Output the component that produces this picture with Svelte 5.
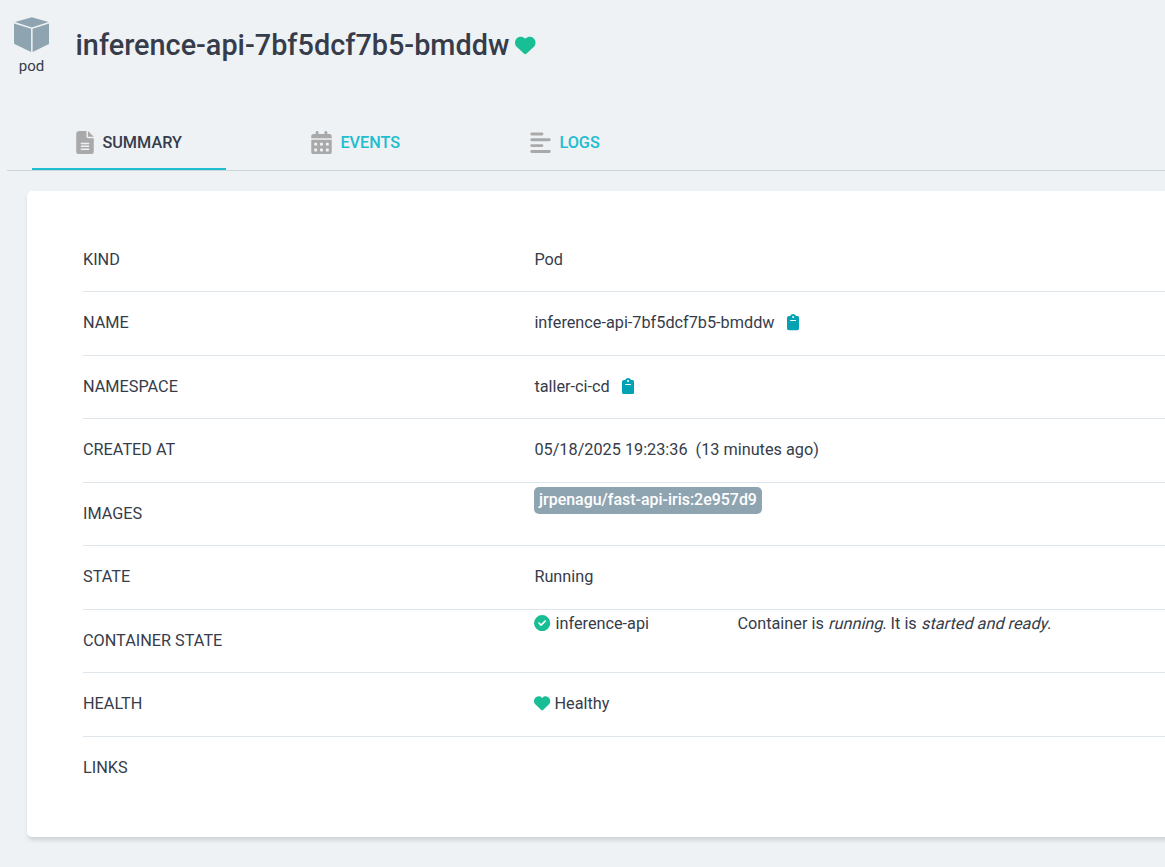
<script>
  const paths = {
    heart: 'M47.6 300.4L228.3 469.1c7.5 7 17.4 10.9 27.7 10.9s20.2-3.9 27.7-10.9L464.4 300.4c30.4-28.3 47.6-68 47.6-109.5v-5.8c0-69.9-50.5-129.5-119.4-141C347 36.5 300.6 51.4 268 84L256 96 244 84c-32.6-32.6-79-47.5-124.6-39.9C50.5 55.6 0 115.2 0 185.1v5.8c0 41.5 17.2 81.2 47.6 109.5z',
    check: 'M256 512A256 256 0 1 0 256 0a256 256 0 1 0 0 512zM369 209L241 337c-9.4 9.4-24.6 9.4-33.9 0l-64-64c-9.4-9.4-9.4-24.6 0-33.9s24.6-9.4 33.9 0l47 47L335 175c9.4-9.4 24.6-9.4 33.9 0s9.4 24.6 0 33.9z',
    clipboard: 'M192 0c-41.8 0-77.4 26.7-90.5 64H64C28.7 64 0 92.7 0 128V448c0 35.3 28.7 64 64 64H320c35.3 0 64-28.7 64-64V128c0-35.3-28.7-64-64-64H282.5C269.4 26.7 233.8 0 192 0zm0 64a32 32 0 1 1 0 64 32 32 0 1 1 0-64zM112 192H272c8.8 0 16 7.2 16 16s-7.2 16-16 16H112c-8.8 0-16-7.2-16-16s7.2-16 16-16z',
    file: 'M64 0C28.7 0 0 28.7 0 64V448c0 35.3 28.7 64 64 64H320c35.3 0 64-28.7 64-64V160H256c-17.7 0-32-14.3-32-32V0H64zM256 0V128H384L256 0zM112 256H272c8.8 0 16 7.2 16 16s-7.2 16-16 16H112c-8.8 0-16-7.2-16-16s7.2-16 16-16zm0 64H272c8.8 0 16 7.2 16 16s-7.2 16-16 16H112c-8.8 0-16-7.2-16-16s7.2-16 16-16zm0 64H272c8.8 0 16 7.2 16 16s-7.2 16-16 16H112c-8.8 0-16-7.2-16-16s7.2-16 16-16z',
    lines: 'M288 64c0 17.7-14.3 32-32 32H32C14.3 96 0 81.7 0 64S14.3 32 32 32H256c17.7 0 32 14.3 32 32zm0 256c0 17.7-14.3 32-32 32H32c-17.7 0-32-14.3-32-32s14.3-32 32-32H256c17.7 0 32 14.3 32 32zM0 192c0-17.7 14.3-32 32-32H416c17.7 0 32 14.3 32 32s-14.3 32-32 32H32c-17.7 0-32-14.3-32-32zM448 448c0 17.7-14.3 32-32 32H32c-17.7 0-32-14.3-32-32s14.3-32 32-32H416c17.7 0 32 14.3 32 32z'
  };
  const cells = [272, 400]
    .flatMap((y) => [64, 192, 320].map((x) => `M${x} ${y}v32q0 16 16 16h32q16 0 16-16v-32q0-16-16-16h-32q-16 0-16 16z`))
    .join('');
  const calendar =
    'M128 0c17.7 0 32 14.3 32 32V64H288V32c0-17.7 14.3-32 32-32s32 14.3 32 32V64h48c26.5 0 48 21.5 48 48v48H0V112C0 85.5 21.5 64 48 64H96V32c0-17.7 14.3-32 32-32zM0 192H448V464c0 26.5-21.5 48-48 48H48c-26.5 0-48-21.5-48-48V192z' +
    cells;
  const name = 'inference-api-7bf5dcf7b5-bmddw';
  const rows = [
    { label: 'KIND', text: 'Pod' },
    { label: 'NAME', text: name, copy: true },
    { label: 'NAMESPACE', text: 'taller-ci-cd', copy: true },
    { label: 'CREATED AT', text: '05/18/2025 19:23:36 \u00a0(13 minutes ago)' },
    { label: 'IMAGES', image: 'jrpenagu/fast-api-iris:2e957d9' },
    { label: 'STATE', text: 'Running' },
    { label: 'CONTAINER STATE', container: 'inference-api' },
    { label: 'HEALTH', health: 'Healthy' },
    { label: 'LINKS' }
  ];
</script>

{#snippet icon(d, cls, w = 512)}
  <svg class={cls} viewBox="0 0 {w} 512" fill="currentColor" fill-rule="evenodd" aria-hidden="true"><path {d} /></svg>
{/snippet}

<div class="page">
  <header>
    <div class="kind">
      <svg viewBox="0 0 36 35.5" fill="currentColor" aria-hidden="true">
        <path d="M18 0L35 4.8L18 10.3L1 4.8Z" />
        <path d="M0 6.3L17.3 11.7V35.3L1 27.4Q0 26.9 0 26Z" />
        <path d="M36 6.3L18.9 11.7V35.3L35 27.4Q36 26.9 36 26Z" />
      </svg>
      <span>pod</span>
    </div>
    <h1>{name}</h1>
    {@render icon(paths.heart, 'title-heart')}
  </header>

  <nav>
    <div class="tab active">{@render icon(paths.file, 'tab-icon file', 384)}<span>SUMMARY</span></div>
    <div class="tab events">{@render icon(calendar, 'tab-icon', 448)}<span>EVENTS</span></div>
    <div class="tab logs">{@render icon(paths.lines, 'tab-icon', 448)}<span>LOGS</span></div>
  </nav>

  <section class="card">
    {#each rows as row}
      <div class="row">
        <div class="label">{row.label}</div>
        <div class="value" class:top={row.image || row.container}>
          {#if row.text}<span>{row.text}</span>{/if}
          {#if row.copy}{@render icon(paths.clipboard, 'copy', 384)}{/if}
          {#if row.image}<span class="badge">{row.image}</span>{/if}
          {#if row.container}
            <div class="container">{@render icon(paths.check, 'status')}<span>{row.container}</span></div>
            <div class="message">Container is <em>running</em>. It is <em>started and ready</em>.</div>
          {/if}
          {#if row.health}{@render icon(paths.heart, 'status health')}<span>{row.health}</span>{/if}
        </div>
      </div>
    {/each}
  </section>
</div>

<style>
  :global(body) {
    background: #eef2f5;
  }
  .page {
    box-sizing: border-box;
    height: 867px;
    overflow: hidden;
    background: #eef2f5;
    color: #363c4a;
    font: 16.25px/20px Roboto, sans-serif;
  }
  svg {
    display: block;
    flex: none;
  }
  header {
    display: flex;
    height: 115px;
  }
  .kind {
    display: flex;
    flex-direction: column;
    align-items: center;
    width: 63px;
    padding-top: 17px;
    margin-right: 12.5px;
    font-size: 15px;
  }
  .kind svg {
    width: 35.5px;
    height: 35.5px;
    margin: 0 0 3.5px;
    color: #8fa4b1;
  }
  h1 {
    margin: 28px 6px 0 0;
    font-size: 28.83px;
    font-weight: 500;
    line-height: 34px;
    white-space: nowrap;
  }
  header > :global(.title-heart) {
    width: 20.5px;
    height: 20.5px;
    margin-top: 35.2px;
    color: #18be94;
  }
  nav {
    display: flex;
    box-sizing: border-box;
    height: 56px;
    margin-left: 7px;
    padding-left: 25px;
    border-bottom: 1px solid #ccd6dd;
  }
  .tab {
    display: flex;
    box-sizing: border-box;
    align-items: center;
    height: 55px;
    padding-top: 2px;
    padding-left: 44px;
    color: #1fbdd0;
    font-weight: 500;
  }
  .active {
    width: 194px;
    border-bottom: 2px solid #1fbdd0;
    color: #363c4a;
  }
  .events {
    width: 219px;
    margin-left: 41px;
    padding-bottom: 2px;
  }
  .logs {
    padding-bottom: 2px;
  }
  .tab :global(.tab-icon) {
    width: 21px;
    height: 23.4px;
    margin-right: 8.1px;
    margin-bottom: 0.6px;
    margin-left: 0.3px;
    color: #a9a9a9;
  }
  .tab :global(.file) {
    width: 18px;
  }
  .card {
    box-sizing: border-box;
    width: 1180px;
    height: 646px;
    margin: 20px 0 0 27px;
    padding: 37.5px 0 0 56px;
    border-radius: 5px;
    background: #fff;
    box-shadow: 1px 3px 4px #ccd0d2;
  }
  .row {
    display: flex;
    box-sizing: border-box;
    height: 63.5px;
    border-bottom: 1px solid #dee6eb;
  }
  .row:last-child {
    border-bottom: 0;
  }
  .label {
    width: 451.4px;
    line-height: 62.5px;
  }
  .value {
    display: flex;
    flex: 1;
    align-items: center;
    white-space: nowrap;
  }
  .value.top {
    align-items: flex-start;
    padding-top: 4px;
  }
  .value :global(.copy) {
    width: 12.2px;
    height: 16.25px;
    margin-bottom: 1.6px;
    margin-left: 12px;
    color: #00a2b3;
  }
  .value :global(.status) {
    width: 16.25px;
    height: 16.25px;
    margin-right: 4.9px;
    margin-bottom: 1.4px;
    color: #18be94;
  }
  .value :global(.health) {
    margin-right: 3.8px;
  }
  .badge {
    height: 27px;
    padding: 0 4.7px;
    border-radius: 5px;
    background: #8fa4b1;
    color: #fff;
    font-size: 15.94px;
    font-weight: 500;
    line-height: 26px;
  }
  .container {
    display: flex;
    align-items: center;
    width: 203px;
  }
  em {
    display: inline-block;
    font-style: normal;
    transform: skewX(-14deg);
    transform-origin: 50% 75%;
  }
</style>
